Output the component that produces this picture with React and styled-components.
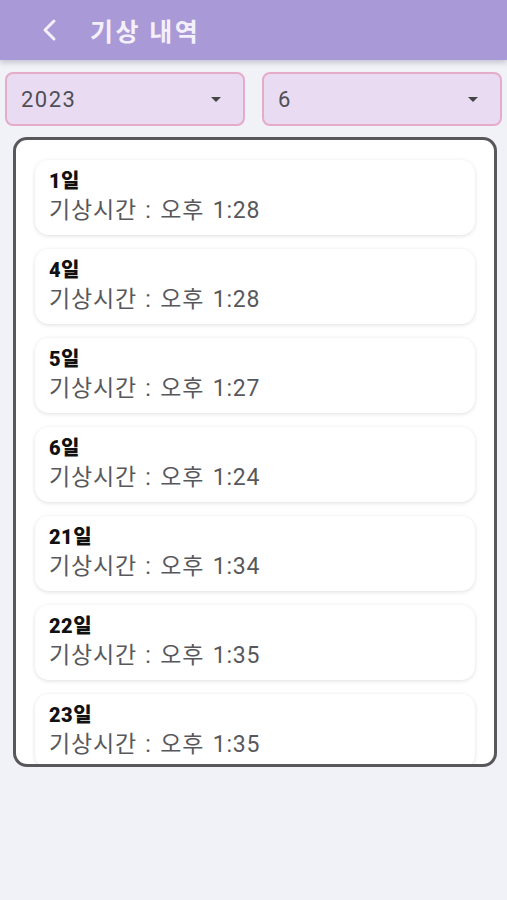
import React from "react";
import styled, { createGlobalStyle } from "styled-components";

const GlobalStyle = createGlobalStyle`
  html, body {
    margin: 0;
    padding: 0;
    background: #f1f2f7;
    font-family: Roboto, "Noto Sans CJK KR", sans-serif;
  }
`;

const Page = styled.div`
  width: 507px;
  height: 900px;
  background: #f1f2f7;
  overflow: hidden;
`;

const Header = styled.header`
  height: 60px;
  background: #a999d6;
  display: flex;
  align-items: center;
  padding-left: 38px;
  gap: 30px;
  box-shadow: 0 3px 5px rgba(80, 70, 120, 0.25);
`;

const BackButton = styled.button`
  border: none;
  background: none;
  padding: 0;
  width: 22px;
  height: 28px;
  display: flex;
  align-items: center;
  justify-content: center;
  cursor: pointer;
`;

const Title = styled.h1`
  margin: 0;
  font-size: 25px;
  font-weight: 700;
  color: #f4f0fb;
  letter-spacing: 2.5px;
  font-family: "Noto Sans CJK KR", sans-serif;
`;

const Filters = styled.div`
  display: flex;
  gap: 17px;
  padding: 12px 5px 0 5px;
`;

const Select = styled.div`
  flex: 1;
  height: 54px;
  box-sizing: border-box;
  background: #e9dcf2;
  border: 2px solid #e6abc9;
  border-radius: 8px;
  display: flex;
  align-items: center;
  justify-content: space-between;
  padding: 0 22px 0 14px;
  font-size: 22px;
  letter-spacing: 1.5px;
  color: #4f4f55;
`;

const Caret = styled.span`
  width: 0;
  height: 0;
  border-left: 5px solid transparent;
  border-right: 5px solid transparent;
  border-top: 5px solid #444;
`;

const ListBox = styled.div`
  margin: 11px 10px 0 13px;
  height: 630px;
  box-sizing: border-box;
  border: 3px solid #58585a;
  border-radius: 14px;
  background: #fff;
  overflow: hidden;
  padding: 20px 19px 0 19px;
  display: flex;
  flex-direction: column;
  gap: 14px;
`;

const Card = styled.div`
  flex-shrink: 0;
  height: 75px;
  box-sizing: border-box;
  border-radius: 14px;
  background: #fff;
  box-shadow: 0 1px 4px rgba(0, 0, 0, 0.13);
  padding: 8px 14px 0 14px;
  display: flex;
  flex-direction: column;
`;

const Day = styled.div`
  font-size: 20px;
  font-weight: 900;
  color: #111;
  line-height: 27px;
  letter-spacing: 0.5px;
`;

const Time = styled.div`
  font-size: 23px;
  color: #58585c;
  line-height: 32px;
  letter-spacing: 0.8px;
  word-spacing: 2px;
`;

const records = [
  { day: 1, time: "1:28" },
  { day: 4, time: "1:28" },
  { day: 5, time: "1:27" },
  { day: 6, time: "1:24" },
  { day: 21, time: "1:34" },
  { day: 22, time: "1:35" },
  { day: 23, time: "1:35" },
];

export default function App() {
  return (
    <Page>
      <GlobalStyle />
      <Header>
        <BackButton aria-label="back">
          <svg width="18" height="24" viewBox="0 0 18 24">
            <path d="M14 3 L5 12 L14 21" fill="none" stroke="#f4f0fb" strokeWidth="3" strokeLinecap="round" strokeLinejoin="round" />
          </svg>
        </BackButton>
        <Title>기상 내역</Title>
      </Header>
      <Filters>
        <Select>
          2023
          <Caret />
        </Select>
        <Select>
          6
          <Caret />
        </Select>
      </Filters>
      <ListBox>
        {records.map((r) => (
          <Card key={r.day}>
            <Day>{r.day}일</Day>
            <Time>기상시간 : 오후 {r.time}</Time>
          </Card>
        ))}
      </ListBox>
    </Page>
  );
}
